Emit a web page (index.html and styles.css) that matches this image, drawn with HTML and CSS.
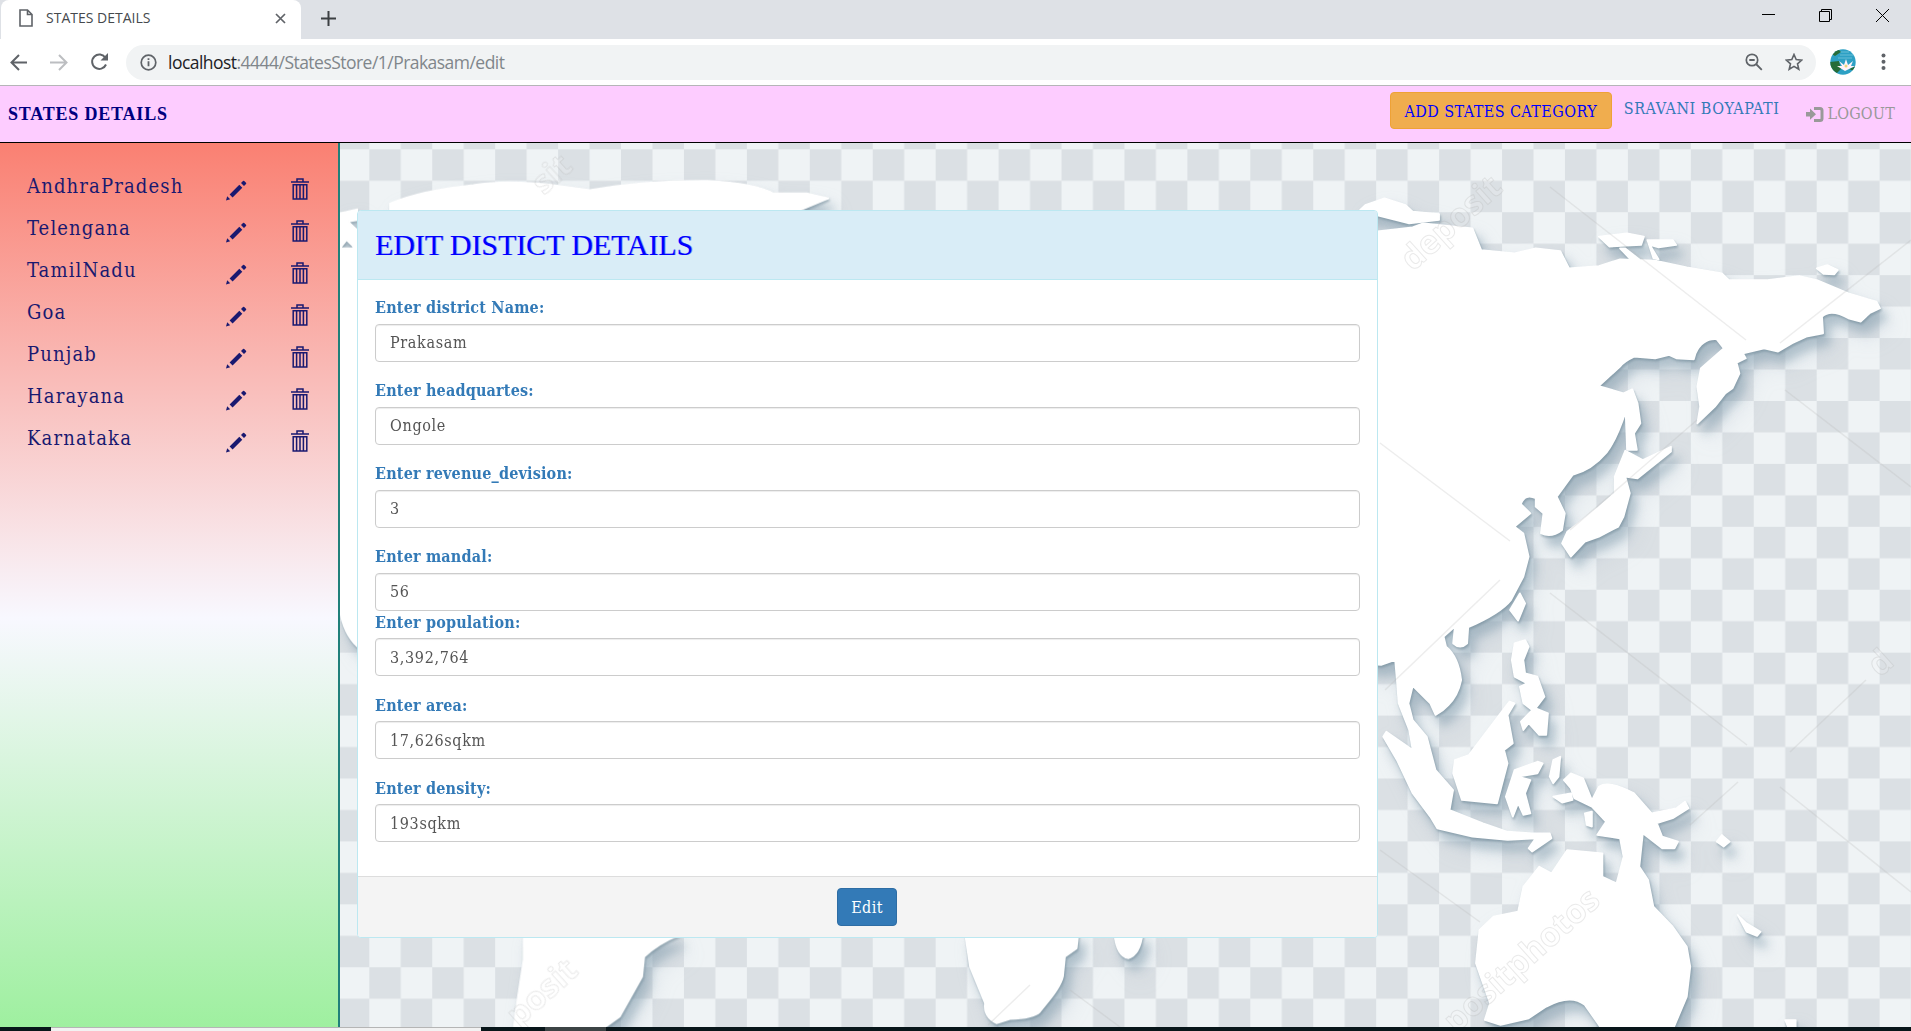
FILE: index.html
```html
<!DOCTYPE html>
<html lang="en">
<head>
<meta charset="utf-8">
<title>STATES DETAILS</title>
<link rel="stylesheet" href="styles.css">
</head>
<body>
<svg width="0" height="0" class="defs">
  <defs>
    <symbol id="pencil" viewBox="0 0 21 21"><path d="M0 20.500l1.200-4.200 3 3zM3.600 14.400L13.300 4.700l3 3-9.700 9.700zM15 3L17 1q.6-.6 1.200 0l1.800 1.800q.6.6 0 1.200l-2 2z" fill="#191970"/></symbol>
    <symbol id="trash" viewBox="0 0 18 22"><path d="M0 4h18M6 3.500V1h6v2.500M2.200 6.800h13.600V21H2.200zM5.600 7v14M9 7v14M12.400 7v14" fill="none" stroke="#191970" stroke-width="1.5"/></symbol>
  </defs>
</svg>
<div class="tabs">
  <div class="tab">
    <svg class="doc" width="14" height="18" viewBox="0 0 14 18"><path d="M1 1h7.500L13 5.500V17H1zM8.500 1v4.500H13" fill="none" stroke="#5f6368" stroke-width="1.600"/></svg>
    <span class="tab-title">STATES DETAILS</span>
    <svg width="11" height="11" viewBox="0 0 11 11"><path d="M1 1l9 9M10 1l-9 9" stroke="#5f6368" stroke-width="1.700"/></svg>
  </div>
  <svg class="plus" width="15" height="15" viewBox="0 0 15 15"><path d="M7.500 0v15M0 7.500h15" stroke="#3c4043" stroke-width="2"/></svg>
  <div class="window">
    <svg width="13" height="13" viewBox="0 0 13 13"><path d="M0 5.500h13" stroke="#000"/></svg>
    <svg width="13" height="13" viewBox="0 0 13 13"><path d="M.5 2.500h10v10H.5zM2.500 2.500v-2h10v10h-2" fill="none" stroke="#000"/></svg>
    <svg width="13" height="13" viewBox="0 0 13 13"><path d="M0 0l13 13M13 0L0 13" stroke="#000"/></svg>
  </div>
</div>
<div class="toolbar">
  <svg width="18" height="17" viewBox="0 0 18 17"><path d="M17 8.500H2M9 1L1.500 8.500 9 16" fill="none" stroke="#5f6368" stroke-width="2"/></svg>
  <svg width="18" height="17" viewBox="0 0 18 17"><path d="M0 8.500h15M9 1l7.500 7.500L9 16" fill="none" stroke="#bcbec1" stroke-width="2"/></svg>
  <svg width="19" height="18" viewBox="0 0 19 18"><path d="M15.500 5A7.200 7.200 0 1 0 16 11.500" fill="none" stroke="#5f6368" stroke-width="2"/><path d="M18 0v7.500h-7.500z" fill="#5f6368"/></svg>
  <div class="omnibox">
    <svg width="17" height="17" viewBox="0 0 17 17"><circle cx="8.500" cy="8.500" r="7.300" fill="none" stroke="#5f6368" stroke-width="1.700"/><path d="M8.500 7.300v5M8.500 4.200v1.900" stroke="#5f6368" stroke-width="1.800"/></svg>
    <div class="url"><b>localhost</b>:4444/StatesStore/1/Prakasam/edit</div>
    <svg width="18" height="18" viewBox="0 0 18 18"><circle cx="7" cy="7" r="5.700" fill="none" stroke="#5f6368" stroke-width="1.700"/><path d="M11 11l5.800 5.800M4.300 7h5.400" stroke="#5f6368" stroke-width="1.800"/></svg>
    <svg class="star" width="18" height="18" viewBox="0 0 18 18"><path d="M9 1.500l2.200 5.100 5.600.5-4.300 3.700 1.300 5.500L9 13.400l-4.800 2.900 1.300-5.500L1.200 7.100l5.600-.5z" fill="none" stroke="#5f6368" stroke-width="1.600"/></svg>
  </div>
  <svg class="avatar" width="26" height="26" viewBox="0 0 26 26">
    <clipPath id="round"><circle cx="13" cy="13" r="12.700"/></clipPath>
    <g clip-path="url(#round)"><path fill="#2da0c4" d="M0 0h26v26H0z"/><path d="M5 3h14M10 6h16M8 9h14" stroke="#69bdd6"/><path d="M0 4l8-4 3 3-6 4zM0 13l9-1 2 8-4 4-7-4zM19 20l7-3v6z" fill="#276c39"/><path d="M15 22l-8-5 5 0-3-5 5 4 2-6 2 6 5-4-2 5 4 0z" fill="#fff3f8"/><circle cx="16" cy="17" r="1.500" fill="#e8d77e"/></g>
  </svg>
  <svg width="5" height="18" viewBox="0 0 5 18"><g fill="#5f6368"><circle cx="2.500" cy="2.500" r="2"/><circle cx="2.500" cy="8.800" r="2"/><circle cx="2.500" cy="15" r="2"/></g></svg>
</div>
<nav class="navbar">
  <div class="brand">STATES DETAILS</div>
  <a class="add">ADD STATES CATEGORY</a>
  <a class="user">SRAVANI BOYAPATI</a>
  <a class="logout"><svg width="18" height="15" viewBox="0 0 18 15"><path d="M0 5h4V1.500l6 5.700-6 5.600V9.500H0z" fill="#999"/><path d="M8 1.600h6q2 0 2 2v7.800q0 2-2 2H8" fill="none" stroke="#999" stroke-width="3"/></svg><span>LOGOUT</span></a>
</nav>
<main class="page">
  <aside class="sidebar">
    <div class="row"><span>AndhraPradesh</span><svg class="pen"><use href="#pencil"/></svg><svg class="bin"><use href="#trash"/></svg></div>
    <div class="row"><span>Telengana</span><svg class="pen"><use href="#pencil"/></svg><svg class="bin"><use href="#trash"/></svg></div>
    <div class="row"><span>TamilNadu</span><svg class="pen"><use href="#pencil"/></svg><svg class="bin"><use href="#trash"/></svg></div>
    <div class="row"><span>Goa</span><svg class="pen"><use href="#pencil"/></svg><svg class="bin"><use href="#trash"/></svg></div>
    <div class="row"><span>Punjab</span><svg class="pen"><use href="#pencil"/></svg><svg class="bin"><use href="#trash"/></svg></div>
    <div class="row"><span>Harayana</span><svg class="pen"><use href="#pencil"/></svg><svg class="bin"><use href="#trash"/></svg></div>
    <div class="row"><span>Karnataka</span><svg class="pen"><use href="#pencil"/></svg><svg class="bin"><use href="#trash"/></svg></div>
  </aside>
  <section class="content">
    <svg class="map" viewBox="340 143 1571 884" width="1571" height="884">
      <defs>
        <pattern id="check" patternUnits="userSpaceOnUse" x="369.300" y="149.300" width="62.930" height="62.920"><path fill="#eff3f5" d="M0 0h63v63H0z"/><path fill="#dbe0e4" d="M0 0h31.460v31.460H0zM31.460 31.460h31.500v31.500h-31.500z"/></pattern>
      </defs>
      <path fill="url(#check)" d="M340 143h1571v884H340z"/>
      <g class="land">
        <g transform="translate(340 140) scale(.33333)">
          <path d="M150 190Q250 150 400 135Q500 118 640 135L750 150Q900 122 1100 122Q1250 130 1300 160L1400 160L1465 175L1370 215H150zM0 220L52 208V240L25 245L52 270V390L30 360L40 320L20 300L0 325zM0 325H52V1520Q10 1480 0 1410z"/>
        </g>
        <g transform="translate(1360 140) scale(.35137 .33333)">
          <path d="M0 210L15 195L70 175L130 195L150 215L225 222L225 240L140 250L50 226L0 226z"/>
          <path d="M0 280L150 262L180 250L320 265L345 330L440 340L500 325L570 333L595 385L680 378L740 358L840 362L930 382L1030 400L1050 420L1160 420L1250 408L1300 420L1390 460L1470 485L1480 505L1450 520L1425 545L1390 535Q1340 505 1315 530L1318 580L1270 590L1230 610L1190 635L1150 625L1090 640L1098 655L1072 668L1080 700L1060 745L1040 760L1010 800L960 850L968 800L960 740L970 685L1035 625L1015 598Q975 595 955 640L950 658L900 655L880 645L840 655L780 650Q750 665 740 680L680 738L750 760L775 748L790 790L798 850L780 880L788 930L760 930L756 815Q730 900 700 940Q660 990 605 1005L560 1070L583 1120L575 1170Q545 1195 515 1180L522 1120L500 1100V1075Q470 1060 458 1092L485 1120L440 1160L465 1180L480 1250L465 1310L430 1380Q400 1420 308 1462L305 1510Q285 1530 265 1510L270 1460L238 1490L245 1520Q280 1550 288 1620Q275 1690 215 1725L200 1690L150 1638L138 1690L150 1740L190 1790L205 1850L215 1890L265 1950L255 2010L350 2050L420 2075L490 2080L540 2080L545 2095L490 2135L480 2125L500 2095L420 2100L320 2090L220 2065L200 2030L150 1960L105 1860L66 1790L75 1775L150 1830L140 1770L110 1690L105 1620L100 1560L60 1575L0 1570z"/>
          <path d="M755 932L805 960L885 920L885 935L790 1015L755 1010L768 1060L750 1130L735 1160L680 1190L640 1205L600 1250L575 1210L590 1175L670 1110L725 1060L725 1010zM680 290L760 280L808 290L800 315L710 320zM740 325L755 325L795 358L770 358zM818 300L890 300L900 315L850 322L825 315L850 358L835 355zM1300 385L1330 375L1360 390L1350 403L1320 402z"/>
        </g>
        <g transform="translate(1360 580) scale(.35137 .33333)">
          <path d="M427 90L455 40L470 70L450 122zM432 240L440 190L470 180L480 200L465 240L470 280L505 290L525 350L500 385L535 400L530 465L510 465L480 430L465 450L458 425L490 390L465 370L455 320L475 310L440 290zM400 400L425 365L440 370L420 405L435 490L410 510L420 550L390 670L290 660L265 580L270 540L310 525zM440 570L505 545L520 550L505 580L450 590L485 600L470 640L485 700L465 705L450 670L435 710L415 650zM540 590L550 540L570 530L565 590L550 610zM550 650L600 640L605 660L575 668zM580 600L600 580L635 595L660 660L680 620Q710 600 780 640L830 700L900 685L925 665L935 685L890 715L845 730L860 770L905 785L895 805L860 805L805 760L795 860L820 900L835 980L890 1040L930 1100L940 1160L930 1250L890 1350H690L640 1275Q600 1240 530 1280L480 1315L400 1335L355 1320L370 1270L330 1150L340 1050L380 1010L450 995L465 920L510 860L545 880L590 810L690 820L690 890L730 910L750 830L740 775L675 765L700 725L660 680L610 655L600 625zM640 700L660 695L660 740L645 735zM1015 785L1030 765L1052 785L1035 800zM1075 1005L1100 1030L1140 1055L1130 1068L1100 1055zM1210 1320H1240V1345H1220z"/>
        </g>
        <g transform="translate(340 860) scale(.40816 .33333)"><path d="M450 220L450 300L435 420L425 510H640L685 470L740 350L745 290Q780 250 830 225z"/></g>
        <g transform="translate(900 840) scale(.33333)"><path d="M195 280L210 380L255 490Q250 530 290 550L330 537Q400 535 420 515L440 490Q490 430 490 400L495 350L530 325L535 280zM643 280Q650 350 685 355Q720 345 728 280z"/></g>
      </g>
      <g class="lines">
        <path d="M1550 187L1746 340M1380 443L1510 541M1380 850L1480 922M1550 593L1747 745M1780 787L1911 892M1785 390L1911 487M1911 240L1780 343M1866 680L1790 752M1738 782L1690 825M1500 580L1385 690M1697 420L1570 530M988 1025L1030 985M1070 990L1120 1027"/>
      </g>
      <g class="mark">
        <text transform="translate(1413 272) rotate(-42)">deposit</text>
        <text transform="translate(544 196) rotate(-42)">sit</text>
        <text transform="translate(519 1028) rotate(-42)">posit</text>
        <text transform="translate(1456 1034) rotate(-42)">positphotos</text>
        <text transform="translate(1880 678) rotate(-42)">d</text>
      </g>
    </svg>
    <form class="panel">
      <h3>EDIT DISTICT DETAILS</h3>
      <div class="fields">
        <div class="group"><label>Enter district Name:</label><input value="Prakasam"></div>
        <div class="group"><label>Enter headquartes:</label><input value="Ongole"></div>
        <div class="group"><label>Enter revenue_devision:</label><input value="3"></div>
        <div class="group tight"><label>Enter mandal:</label><input value="56"></div>
        <div class="group"><label>Enter population:</label><input value="3,392,764"></div>
        <div class="group"><label>Enter area:</label><input value="17,626sqkm"></div>
        <div class="group"><label>Enter density:</label><input value="193sqkm"></div>
      </div>
      <footer><button type="button">Edit</button></footer>
    </form>
  </section>
</main>
<div class="taskbar"><i class="search"></i><i class="active"></i></div>
</body>
</html>
```
FILE: styles.css
```css
* { box-sizing: border-box; }
body {
  margin: 0;
  height: 1031px;
  overflow: hidden;
  display: flex;
  flex-direction: column;
  font-family: "DejaVu Serif Condensed", "DejaVu Serif", serif;
  font-stretch: condensed;
  font-size: 16px;
}
svg { flex: none; display: block; }
.defs { position: absolute; }

.tabs { height: 39px; flex: none; background: #dee1e6; display: flex; }
.tab {
  width: 300px; margin-left: 1px; padding: 0 15px 3px 18px;
  background: #fff; border-radius: 8px 8px 0 0;
  display: flex; align-items: center;
}
.tab-title { flex: 1; margin: -2px 0 0 13px; font: 14px "Open Sans", sans-serif; letter-spacing: 0; color: #45494d; }
.plus { margin: 11px 0 0 20px; }
.window { margin-left: auto; display: flex; gap: 44px; padding: 9px 22px 0 0; }

.toolbar {
  height: 47px; flex: none; background: #fff; border-bottom: 1px solid #b5b5b8;
  display: flex; align-items: center; padding: 0 25px 0 10px;
}
.toolbar > svg:nth-child(2) { margin-left: 22px; }
.toolbar > svg:nth-child(3) { margin-left: 22px; }
.omnibox {
  flex: 1; height: 35px; margin-left: 17px; padding: 0 13px 0 14px;
  background: #f1f3f4; border-radius: 18px; display: flex; align-items: center;
}
.url { flex: 1; margin: -1px 0 0 11px; font: 17.5px "Open Sans", sans-serif; letter-spacing: -0.53px; color: #80868b; }
.url b { font-weight: 400; color: #202124; }
.star { margin-left: 22px; }
.toolbar .avatar { margin: 0 25px 0 14px; }

.navbar {
  height: 57px; flex: none; background: #fdccff; border-bottom: 1px solid #000;
  display: flex; align-items: flex-start; padding-right: 16px;
}
.brand { flex: 1; padding: 16px 0 0 8px; font: bold 18px/24px "Liberation Serif", serif; letter-spacing: 0.8px; color: #000080; }
.add, .user, .logout { white-space: nowrap; }
.add {
  width: 222px; height: 37px; margin-top: 6px; line-height: 37px; text-align: center;
  background: #f0ad4e; border: 1px solid #eea236; border-radius: 4px; color: #00f;
  letter-spacing: 0.43px;
}
.user { margin: 12px 0 0 12px; line-height: 22px; letter-spacing: 0.52px; color: #337ab7; }
.logout { margin: 17px 0 0 27px; line-height: 22px; display: flex; align-items: center; gap: 3px; letter-spacing: 0.2px; color: #999; }

.page { height: 884px; flex: none; display: flex; }
.sidebar {
  width: 340px; padding: 23px 29px 0 27px; border-right: 2px solid #20807a;
  background: linear-gradient(#fa8072, #f8f8ff 475px, #90ee90 950px);
}
.row { height: 42px; display: flex; align-items: flex-start; color: #191970; }
.row span { width: 199px; font-size: 20px; line-height: 40px; height: 42px; letter-spacing: 1.15px; }
.pen { width: 21px; height: 21px; margin-top: 14px; }
.bin { width: 18px; height: 22px; margin: 12px 0 0 44px; }

.content { flex: 1; position: relative; padding: 67px 0 0 17px; }
.map { position: absolute; left: 0; top: 0; }
.land {
  fill: #fff; stroke: #fff; stroke-width: 5; stroke-linejoin: round;
  filter: drop-shadow(1px 2px 1px rgba(110, 135, 150, .55)) drop-shadow(6px 10px 5px rgba(120, 147, 165, .42)) drop-shadow(6px 9px 8px rgba(150, 170, 190, .25));
}
.lines { fill: none; stroke: #b8b8b8; stroke-opacity: .25; stroke-width: 1.5; }
.mark { font: bold 33px "Open Sans", sans-serif; fill: #fff; fill-opacity: .15; stroke: #aaa; stroke-opacity: .25; }

.panel {
  position: relative; width: 1021px; height: 728px; margin: 0;
  background: #fff; border: 1px solid #bce8f1; border-radius: 4px;
  display: flex; flex-direction: column; overflow: hidden;
}
h3 {
  margin: 0; height: 69px; flex: none; padding-left: 17px;
  background: #d9edf7; border-bottom: 1px solid #bce8f1;
  font: 30px/67px "Liberation Serif", serif; letter-spacing: -0.08px; color: #00f;
  text-shadow: 1px 0 rgba(0, 0, 255, .35);
}
.fields { flex: 1; padding: 16.2px 17px 0; }
.group { margin-bottom: 17.4px; }
.tight { margin-bottom: 0; }
label { display: block; height: 27.6px; line-height: 23px; font-weight: bold; letter-spacing: 0.18px; color: #337ab7; }
input {
  display: block; width: 100%; height: 38px; padding: 0 14px;
  border: 1px solid #ccc; border-radius: 4px; box-shadow: inset 0 1px 1px rgba(0, 0, 0, .075);
  font: inherit; letter-spacing: 0.65px; color: #555; background: #fff;
}
footer { height: 61px; flex: none; background: #f4f4f4; border-top: 1px solid #ddd; padding: 11px 1px 0 0; text-align: center; }
button {
  width: 60px; height: 38px; padding: 0; border: 1px solid #2e6da4; border-radius: 4px;
  background: #337ab7; color: #fff; font: inherit; letter-spacing: 0.4px;
}

.taskbar { height: 4px; flex: none; background: #08161a; display: flex; padding-left: 51px; }
.search { width: 430px; background: #f2f2f2; border-top: 1px solid #b5b5b5; }
.active { width: 61px; margin-left: 64px; background: #3c4445; }
```
